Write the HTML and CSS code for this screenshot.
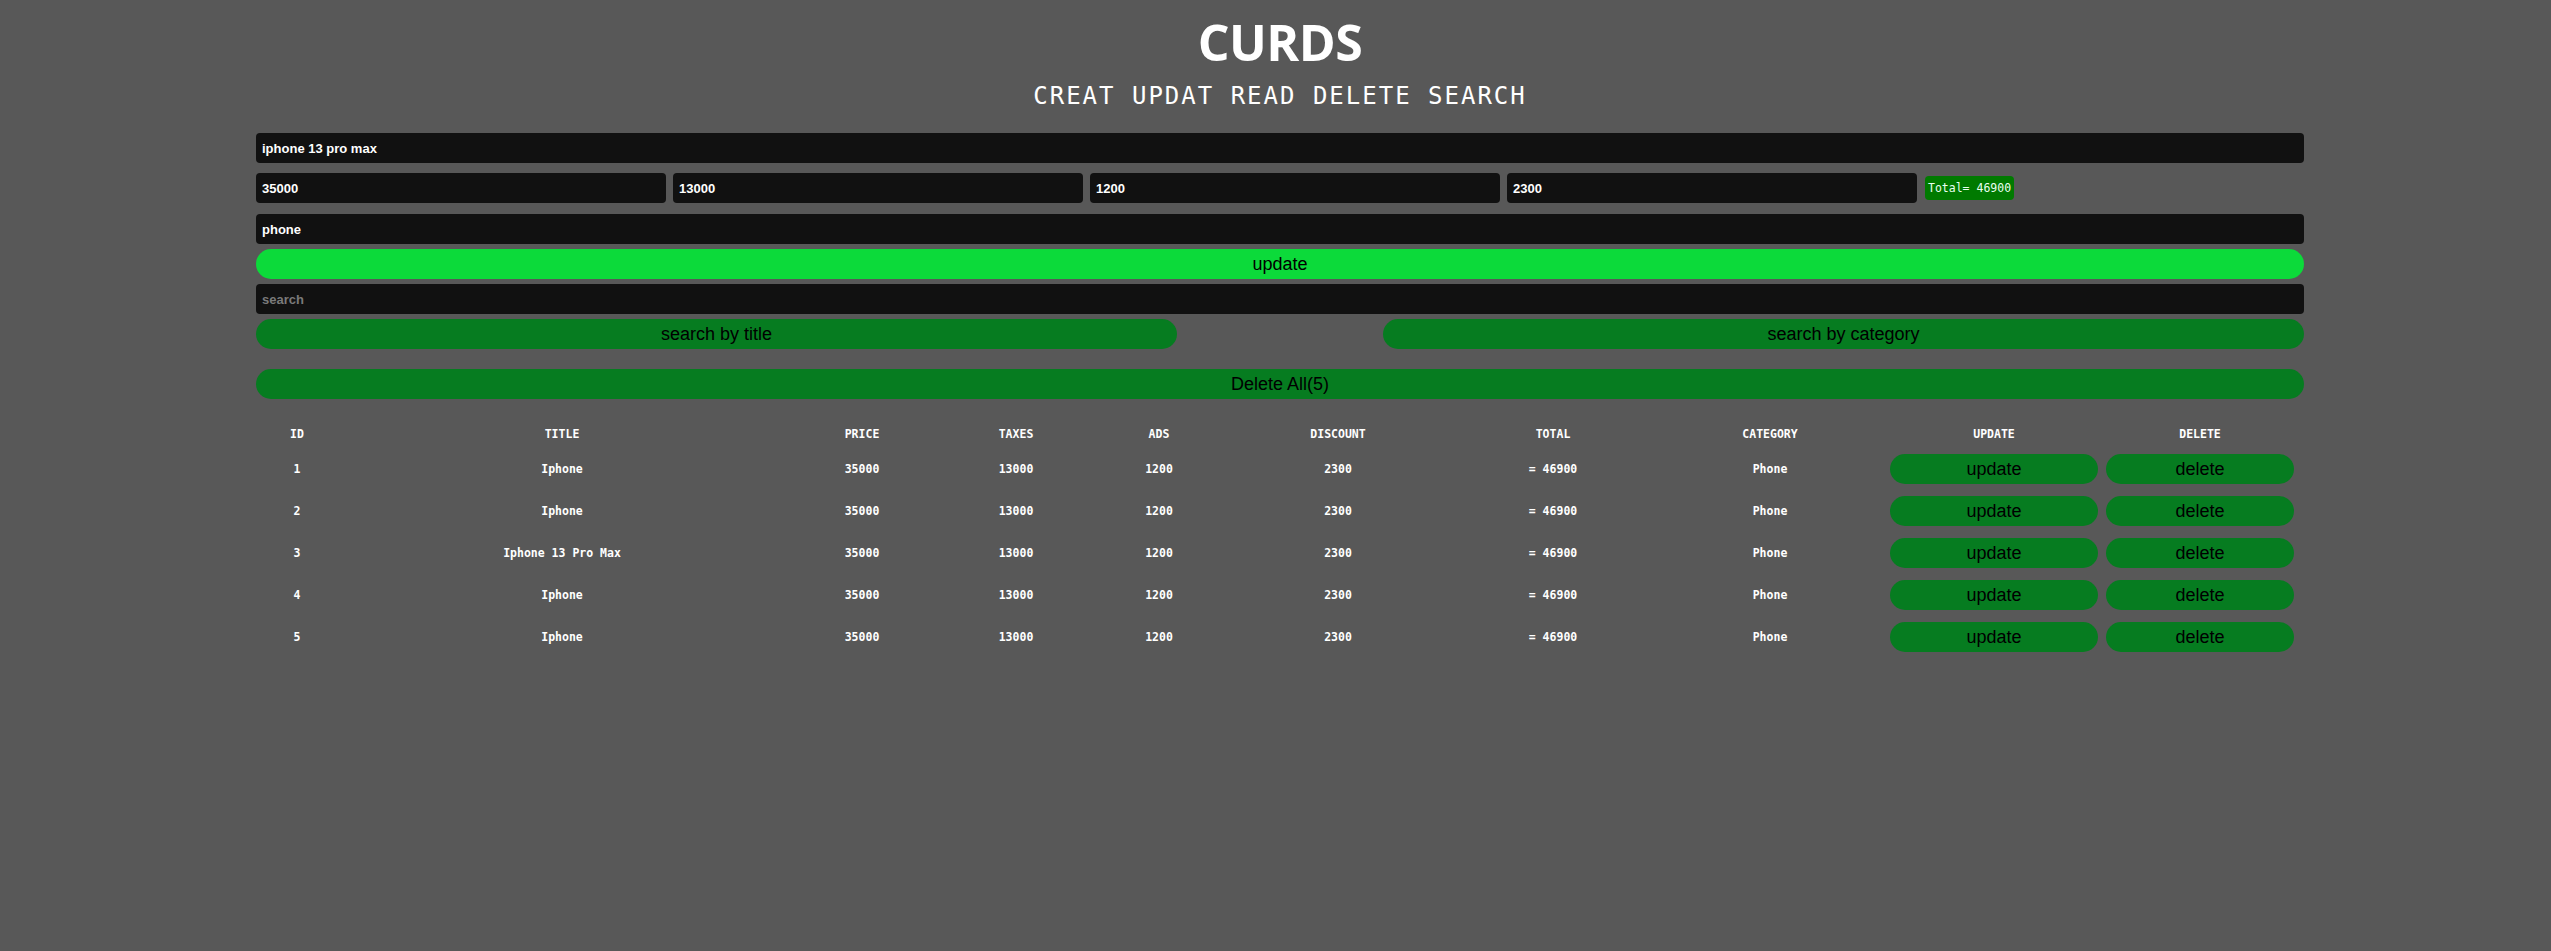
FILE: index.html
```html
<!DOCTYPE html>
<html lang="en">
<head>
<meta charset="utf-8">
<title>CURDS</title>
<link rel="stylesheet" href="styles.css">
</head>
<body>
<div class="crud">
  <header class="head">
    <h1 class="logo">CURDS</h1>
    <h2 class="sub">CREAT UPDAT READ DELETE SEARCH</h2>
  </header>
  <div class="inputs">
    <input class="field" type="text" value="iphone 13 pro max">
    <div class="price">
      <input class="field small" type="text" value="35000">
      <input class="field small" type="text" value="13000">
      <input class="field small" type="text" value="1200">
      <input class="field small" type="text" value="2300">
      <small class="total">Total= 46900</small>
    </div>
    <input class="field cat" type="text" value="phone">
    <button class="btn bright">update</button>
  </div>
  <div class="search-block">
    <input class="field" type="text" placeholder="search">
    <div class="search-btns">
      <button class="btn half">search by title</button>
      <button class="btn half">search by category</button>
    </div>
  </div>
  <div class="delete-all">
    <button class="btn">Delete All(5)</button>
  </div>
  <table class="grid">
    <colgroup>
      <col style="width:82px"><col style="width:448px"><col style="width:152px"><col style="width:156px"><col style="width:130px"><col style="width:228px"><col style="width:202px"><col style="width:232px"><col style="width:216px"><col style="width:196px">
    </colgroup>
    <thead>
      <tr><th>ID</th><th>TITLE</th><th>PRICE</th><th>TAXES</th><th>ADS</th><th>DISCOUNT</th><th>TOTAL</th><th>CATEGORY</th><th>UPDATE</th><th>DELETE</th></tr>
    </thead>
    <tbody>
      <tr><td>1</td><td>Iphone</td><td>35000</td><td>13000</td><td>1200</td><td>2300</td><td>= 46900</td><td>Phone</td><td><button class="btn row">update</button></td><td><button class="btn row">delete</button></td></tr>
      <tr><td>2</td><td>Iphone</td><td>35000</td><td>13000</td><td>1200</td><td>2300</td><td>= 46900</td><td>Phone</td><td><button class="btn row">update</button></td><td><button class="btn row">delete</button></td></tr>
      <tr><td>3</td><td>Iphone 13 Pro Max</td><td>35000</td><td>13000</td><td>1200</td><td>2300</td><td>= 46900</td><td>Phone</td><td><button class="btn row">update</button></td><td><button class="btn row">delete</button></td></tr>
      <tr><td>4</td><td>Iphone</td><td>35000</td><td>13000</td><td>1200</td><td>2300</td><td>= 46900</td><td>Phone</td><td><button class="btn row">update</button></td><td><button class="btn row">delete</button></td></tr>
      <tr><td>5</td><td>Iphone</td><td>35000</td><td>13000</td><td>1200</td><td>2300</td><td>= 46900</td><td>Phone</td><td><button class="btn row">update</button></td><td><button class="btn row">delete</button></td></tr>
    </tbody>
  </table>
</div>
</body>
</html>
```
FILE: styles.css
```css
* { box-sizing: border-box; }
html, body { height: 100%; }
body {
  margin: 0;
  padding: 16px 0 0 9px;
  background: #585858;
  color: #fff;
  font-family: "Liberation Sans", Arial, sans-serif;
}
.crud {
  width: 2048px;
  margin: 0 auto;
}
.head { text-align: center; }
.logo {
  margin: 0;
  font-family: "Open Sans", sans-serif;
  font-weight: 700;
  font-size: 50px;
  line-height: 52px;
  letter-spacing: -0.5px;
  color: #fff;
}
.sub {
  margin: 16px 0 25px;
  font-family: "DejaVu Sans Mono", monospace;
  font-weight: 400;
  font-size: 24px;
  line-height: 24px;
  letter-spacing: 2px;
  color: #fff;
}
.field {
  display: block;
  width: 100%;
  height: 30px;
  border: none;
  outline: none;
  border-radius: 4px;
  background: #111;
  color: #fff;
  padding: 0 6px;
  font-family: "Liberation Sans", Arial, sans-serif;
  font-weight: 700;
  font-size: 13px;
}
.field::placeholder { color: #7a7a7a; }
.price {
  display: flex;
  align-items: center;
  gap: 7px;
  margin: 10px 0 11px;
}
.field.small { width: 410px; flex: none; }
.total {
  display: block;
  margin-left: 1px;
  padding: 4px 3px;
  border-radius: 4px;
  background: #007a00;
  color: #e8fff0;
  font-family: "DejaVu Sans Mono", monospace;
  font-weight: 400;
  font-size: 11.5px;
  line-height: 16px;
}
.btn {
  display: block;
  width: 100%;
  height: 30px;
  border: none;
  border-radius: 15px;
  background: #067c20;
  color: #000;
  font-family: "Liberation Sans", Arial, sans-serif;
  font-size: 18px;
  padding: 0;
  cursor: pointer;
}
.btn.bright {
  margin-top: 5px;
  background: #0cda3a;
}
.search-block { margin-top: 5px; }
.search-btns {
  display: flex;
  justify-content: space-between;
  margin-top: 5px;
}
.btn.half { width: 921px; }
.delete-all { margin-top: 20px; }
.grid {
  width: 2042px;
  margin-top: 20px;
  border-collapse: collapse;
  table-layout: fixed;
  font-family: "DejaVu Sans Mono", monospace;
  font-size: 11.5px;
  text-align: center;
}
.grid th {
  height: 29px;
  padding: 0 4px;
  font-weight: 700;
}
.grid td {
  height: 42px;
  padding: 0 4px;
  font-weight: 700;
}
.btn.row { font-size: 18px; }
```
